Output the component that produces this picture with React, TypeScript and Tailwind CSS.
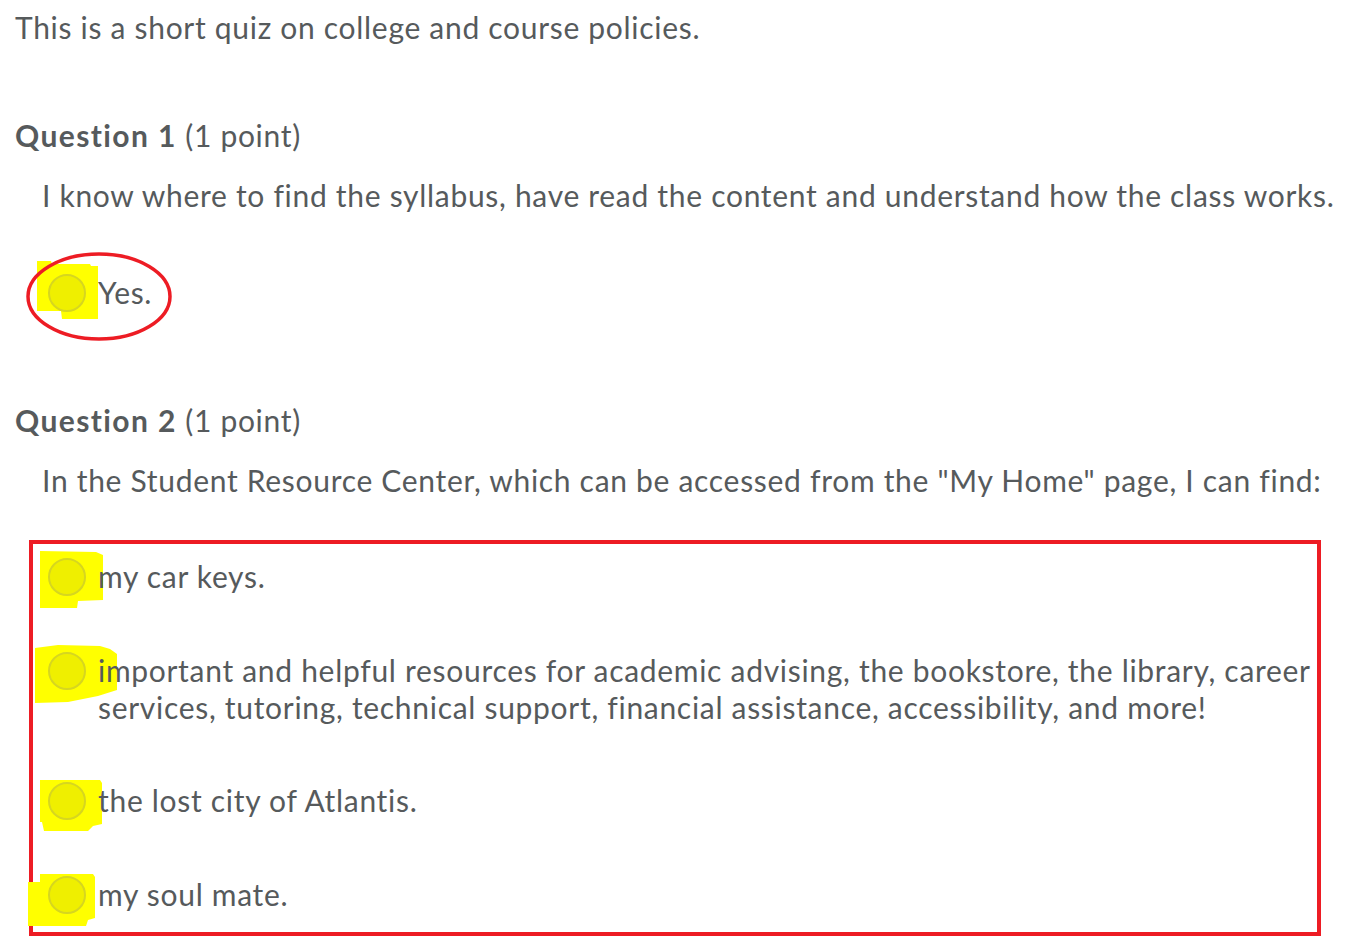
import type { ReactNode } from 'react';

type Pt = [number, number];

type Opt = {
  text: ReactNode;
  marker: Pt[];
};

// highlighter strokes, coords relative to the radio's top-left corner
const yesMarker: Pt[] = [
  [-11, -13], [3, -13], [4, -10], [42, -10], [43, -8], [50, -8], [50, 45], [14, 45], [13, 37], [-11, 37],
];

const q2Options: Opt[] = [
  {
    text: 'my car keys.',
    marker: [[-8, -7], [48, -6], [55, -3], [55, 42], [30, 43], [29, 50], [-8, 50]],
  },
  {
    text: 'important and helpful resources for academic advising, the bookstore, the library, career services, tutoring, technical support, financial assistance, accessibility, and more!',
    marker: [[-13, -4], [10, -7], [52, -6], [62, -3], [69, 2], [69, 38], [50, 44], [20, 50], [-13, 51]],
  },
  {
    text: 'the lost city of Atlantis.',
    marker: [[-8, -2], [52, -2], [54, 1], [54, 42], [45, 44], [40, 49], [-4, 49], [-6, 40], [-8, 40]],
  },
  {
    text: 'my soul mate.',
    marker: [[-8, -2], [45, -2], [47, 1], [47, 42], [40, 44], [38, 50], [-20, 50], [-20, 6], [-8, 6]],
  },
];

function Radio({ marker }: { marker: Pt[] }) {
  const pts = marker.map(([x, y]) => `${x + 30},${y + 20}`).join(' ');
  return (
    <span className="relative h-[38px] w-[38px] shrink-0">
      <svg
        className="absolute left-[-30px] top-[-20px] h-[100px] w-[110px]"
        viewBox="0 0 110 100"
        aria-hidden
      >
        <polygon points={pts} fill="#ffff00" />
      </svg>
      <span className="absolute inset-0 rounded-full border-2 border-[#d6d620] bg-[#efef00]" />
    </span>
  );
}

function Option({ text, marker }: Opt) {
  return (
    <label className="flex items-start">
      <Radio marker={marker} />
      <span className="relative ml-[12px]">{text}</span>
    </label>
  );
}

function QuestionHead({ n }: { n: number }) {
  return (
    <h2 className="leading-[37px]">
      <span className="font-bold tracking-[1.4px]">Question {n}</span> (1 point)
    </h2>
  );
}

export default function App() {
  return (
    <div
      className="min-h-screen bg-white pl-[15px] pt-[9px] text-[30px] leading-[37px] tracking-[0.7px] text-[#565a5c] [font-variant-ligatures:none]"
      style={{ fontFamily: 'Lato, "Noto Sans", sans-serif' }}
    >
      <p>This is a short quiz on college and course policies.</p>

      <div className="mt-[71px]">
        <QuestionHead n={1} />
        <p className="ml-[27px] mt-[23px]">
          I know where to find the syllabus, have read the content and understand how the class works.
        </p>
        <div className="relative ml-[33px] mt-[60px]">
          <Option text="Yes." marker={yesMarker} />
          {/* red circle annotation */}
          <svg
            className="pointer-events-none absolute left-[-22px] top-[-23px] h-[92px] w-[150px]"
            viewBox="0 0 150 92"
            aria-hidden
          >
            <ellipse cx="73" cy="45.5" rx="71" ry="42.5" fill="none" stroke="#ed1c24" strokeWidth="3.5" />
          </svg>
        </div>
      </div>

      <div className="mt-[90px]">
        <QuestionHead n={2} />
        <p className="ml-[27px] mt-[23px]">
          In the Student Resource Center, which can be accessed from the "My Home" page, I can find:
        </p>
        <div className="ml-[14px] mt-[41px] flex w-[1292px] flex-col gap-[56px] border-4 border-[#ed1c24] pb-[18px] pl-[15px] pr-0 pt-[14px]">
          {q2Options.map((o, i) => (
            <Option key={i} text={o.text} marker={o.marker} />
          ))}
        </div>
      </div>
    </div>
  );
}
